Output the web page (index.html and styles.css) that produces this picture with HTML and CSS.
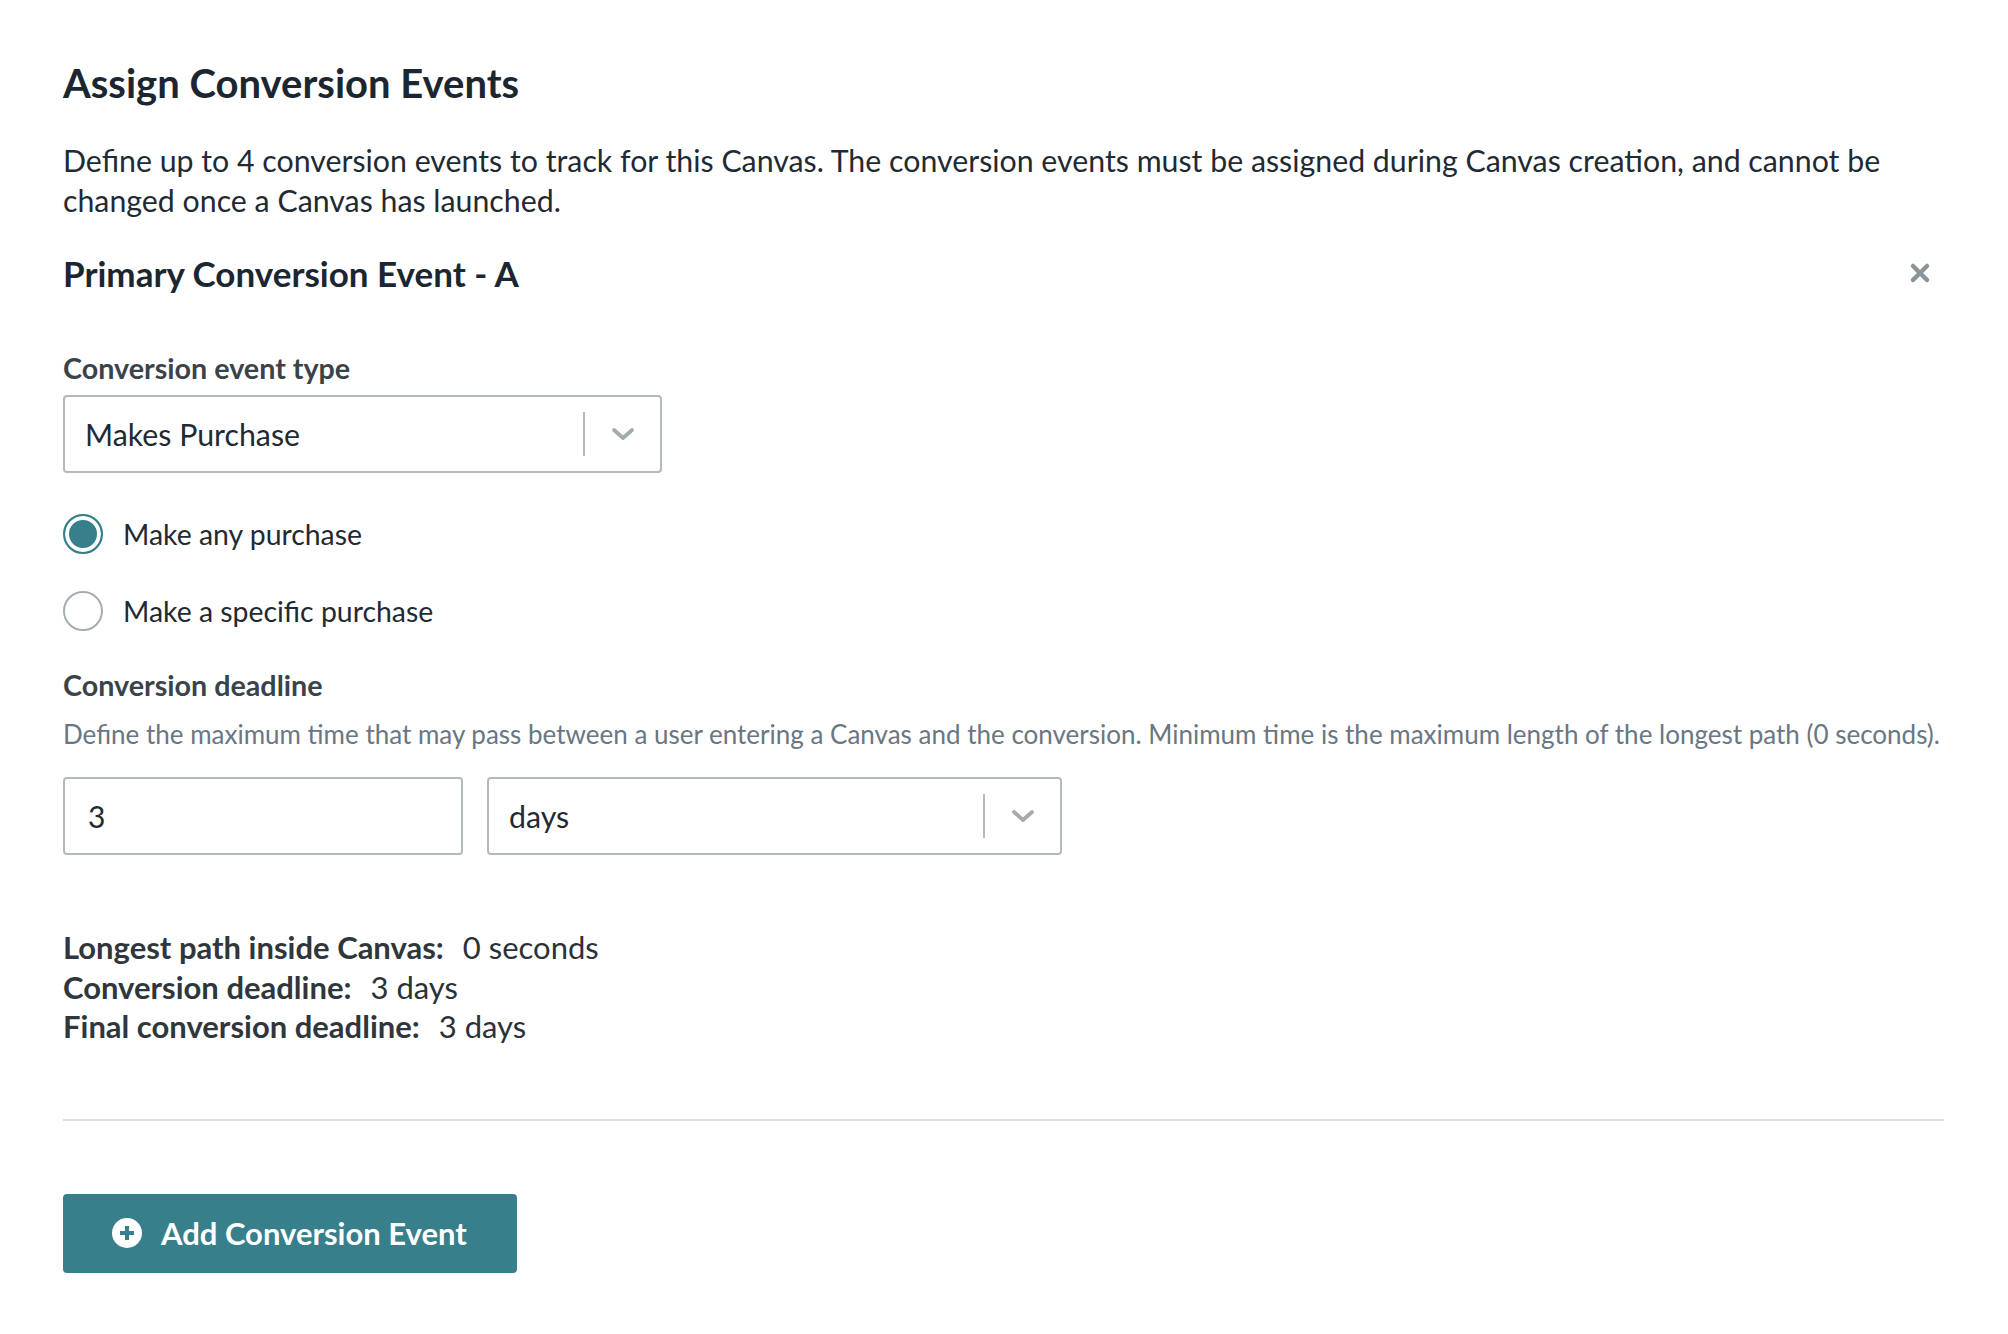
FILE: index.html
```html
<!DOCTYPE html>
<html lang="en">
<head>
  <meta charset="UTF-8">
  <title>Assign Conversion Events</title>
  <link rel="stylesheet" href="styles.css">
</head>
<body>
  <div class="page">
    <h2 class="title">Assign Conversion Events</h2>
    <p class="intro">Define up to 4 conversion events to track for this Canvas. The conversion events must be assigned during Canvas creation, and cannot be changed once a Canvas has launched.</p>

    <div class="event-head">
      <h3>Primary Conversion Event - A</h3>
      <button class="close" aria-label="Remove">
        <svg width="22" height="22" viewBox="0 0 22 22"><path d="M4 4 L18 18 M18 4 L4 18" stroke="#8b949a" stroke-width="4.5" stroke-linecap="round"/></svg>
      </button>
    </div>

    <div class="label label-type">Conversion event type</div>
    <div class="select select-type">
      <span class="select-value">Makes Purchase</span>
      <span class="select-sep"></span>
      <svg class="chev" width="24" height="14" viewBox="0 0 24 14"><path d="M3 3 L12 11 L21 3" fill="none" stroke="#a3abb0" stroke-width="3.8" stroke-linecap="round" stroke-linejoin="round"/></svg>
    </div>

    <div class="radios">
      <label class="radio checked"><span class="dot"></span>Make any purchase</label>
      <label class="radio"><span class="dot"></span>Make a specific purchase</label>
    </div>

    <div class="label label-deadline">Conversion deadline</div>
    <p class="help">Define the maximum time that may pass between a user entering a Canvas and the conversion. Minimum time is the maximum length of the longest path (0 seconds).</p>

    <div class="deadline-row">
      <div class="input">3</div>
      <div class="select select-unit">
        <span class="select-value">days</span>
        <span class="select-sep"></span>
        <svg class="chev" width="24" height="14" viewBox="0 0 24 14"><path d="M3 3 L12 11 L21 3" fill="none" stroke="#a3abb0" stroke-width="3.8" stroke-linecap="round" stroke-linejoin="round"/></svg>
      </div>
    </div>

    <div class="summary">
      <div><b>Longest path inside Canvas:</b><span>0 seconds</span></div>
      <div><b>Conversion deadline:</b><span>3 days</span></div>
      <div><b>Final conversion deadline:</b><span>3 days</span></div>
    </div>

    <hr class="divider">

    <button class="add">
      <svg width="32" height="32" viewBox="0 0 32 32"><circle cx="16" cy="16" r="15" fill="#fff"/><path d="M16 9 V23 M9 16 H23" stroke="#387f8c" stroke-width="4"/></svg>
      Add Conversion Event
    </button>
  </div>
</body>
</html>
```

FILE: styles.css
```css
body { margin: 0; background: #fff; font-family: Lato, "Noto Sans", sans-serif; color: #1f2a33; }
.page { padding: 61px 64px 60px 63px; }
.title { font-size: 40px; line-height: 44px; font-weight: 700; margin: 0; color: #1c2630; }
.intro { font-size: 30.3px; line-height: 40px; margin: 35px 0 0; color: #1f2a33; }
.event-head { display: flex; align-items: center; justify-content: space-between; margin-top: 33px; padding-right: 13px; }
.event-head h3 { font-size: 35px; line-height: 40px; font-weight: 700; margin: 0; color: #1c2630; }
.close { background: none; border: none; padding: 0; margin: 0; cursor: pointer; display: flex; }
.label { font-size: 28.7px; line-height: 32px; font-weight: 700; color: #3a434a; }
.label-type { margin-top: 59px; }
.select { box-sizing: border-box; height: 78px; border: 2px solid #b3babe; border-radius: 4px; display: flex; align-items: center; padding-left: 20px; background: #fff; }
.select-type { width: 599px; margin-top: 11px; }
.select-value { flex: 1; font-size: 30.3px; color: #1f2a33; }
.select-sep { width: 2px; height: 44px; background: #b3babe; }
.chev { margin: 0 25px 0 26px; }
.radios { margin-top: 41px; display: flex; flex-direction: column; gap: 37px; }
.radio { display: flex; align-items: center; height: 40px; font-size: 28.4px; color: #1f2a33; }
.dot { box-sizing: border-box; width: 40px; height: 40px; border-radius: 50%; border: 2px solid #a6adb2; margin-right: 20px; flex: none; }
.radio.checked .dot { border: 2.5px solid #387f8c; background: #387f8c; box-shadow: inset 0 0 0 4px #fff; }
.label-deadline { margin-top: 38px; }
.help { font-size: 26px; line-height: 32px; margin: 17px 0 0; color: #6a7682; }
.deadline-row { display: flex; gap: 24px; margin-top: 27px; }
.input { box-sizing: border-box; width: 400px; height: 78px; border: 2px solid #b3babe; border-radius: 4px; display: flex; align-items: center; padding-left: 23px; font-size: 30px; color: #1f2a33; }
.select-unit { width: 575px; padding-left: 20px; }
.summary { margin-top: 73px; font-size: 31px; line-height: 39.5px; color: #2a3238; }
.summary b { font-size: 31px; font-weight: 700; color: #2f373d; margin-right: 19px; }
.divider { border: none; height: 2px; background: #dcdfe2; margin: 72px 0 0; }
.add { margin-top: 73px; display: flex; align-items: center; gap: 18px; height: 79px; padding: 0 50px 0 48px; background: #387f8c; color: #fff; border: none; border-radius: 4px; font-family: Lato, "Noto Sans", sans-serif; font-size: 31px; font-weight: 700; cursor: pointer; }
```
